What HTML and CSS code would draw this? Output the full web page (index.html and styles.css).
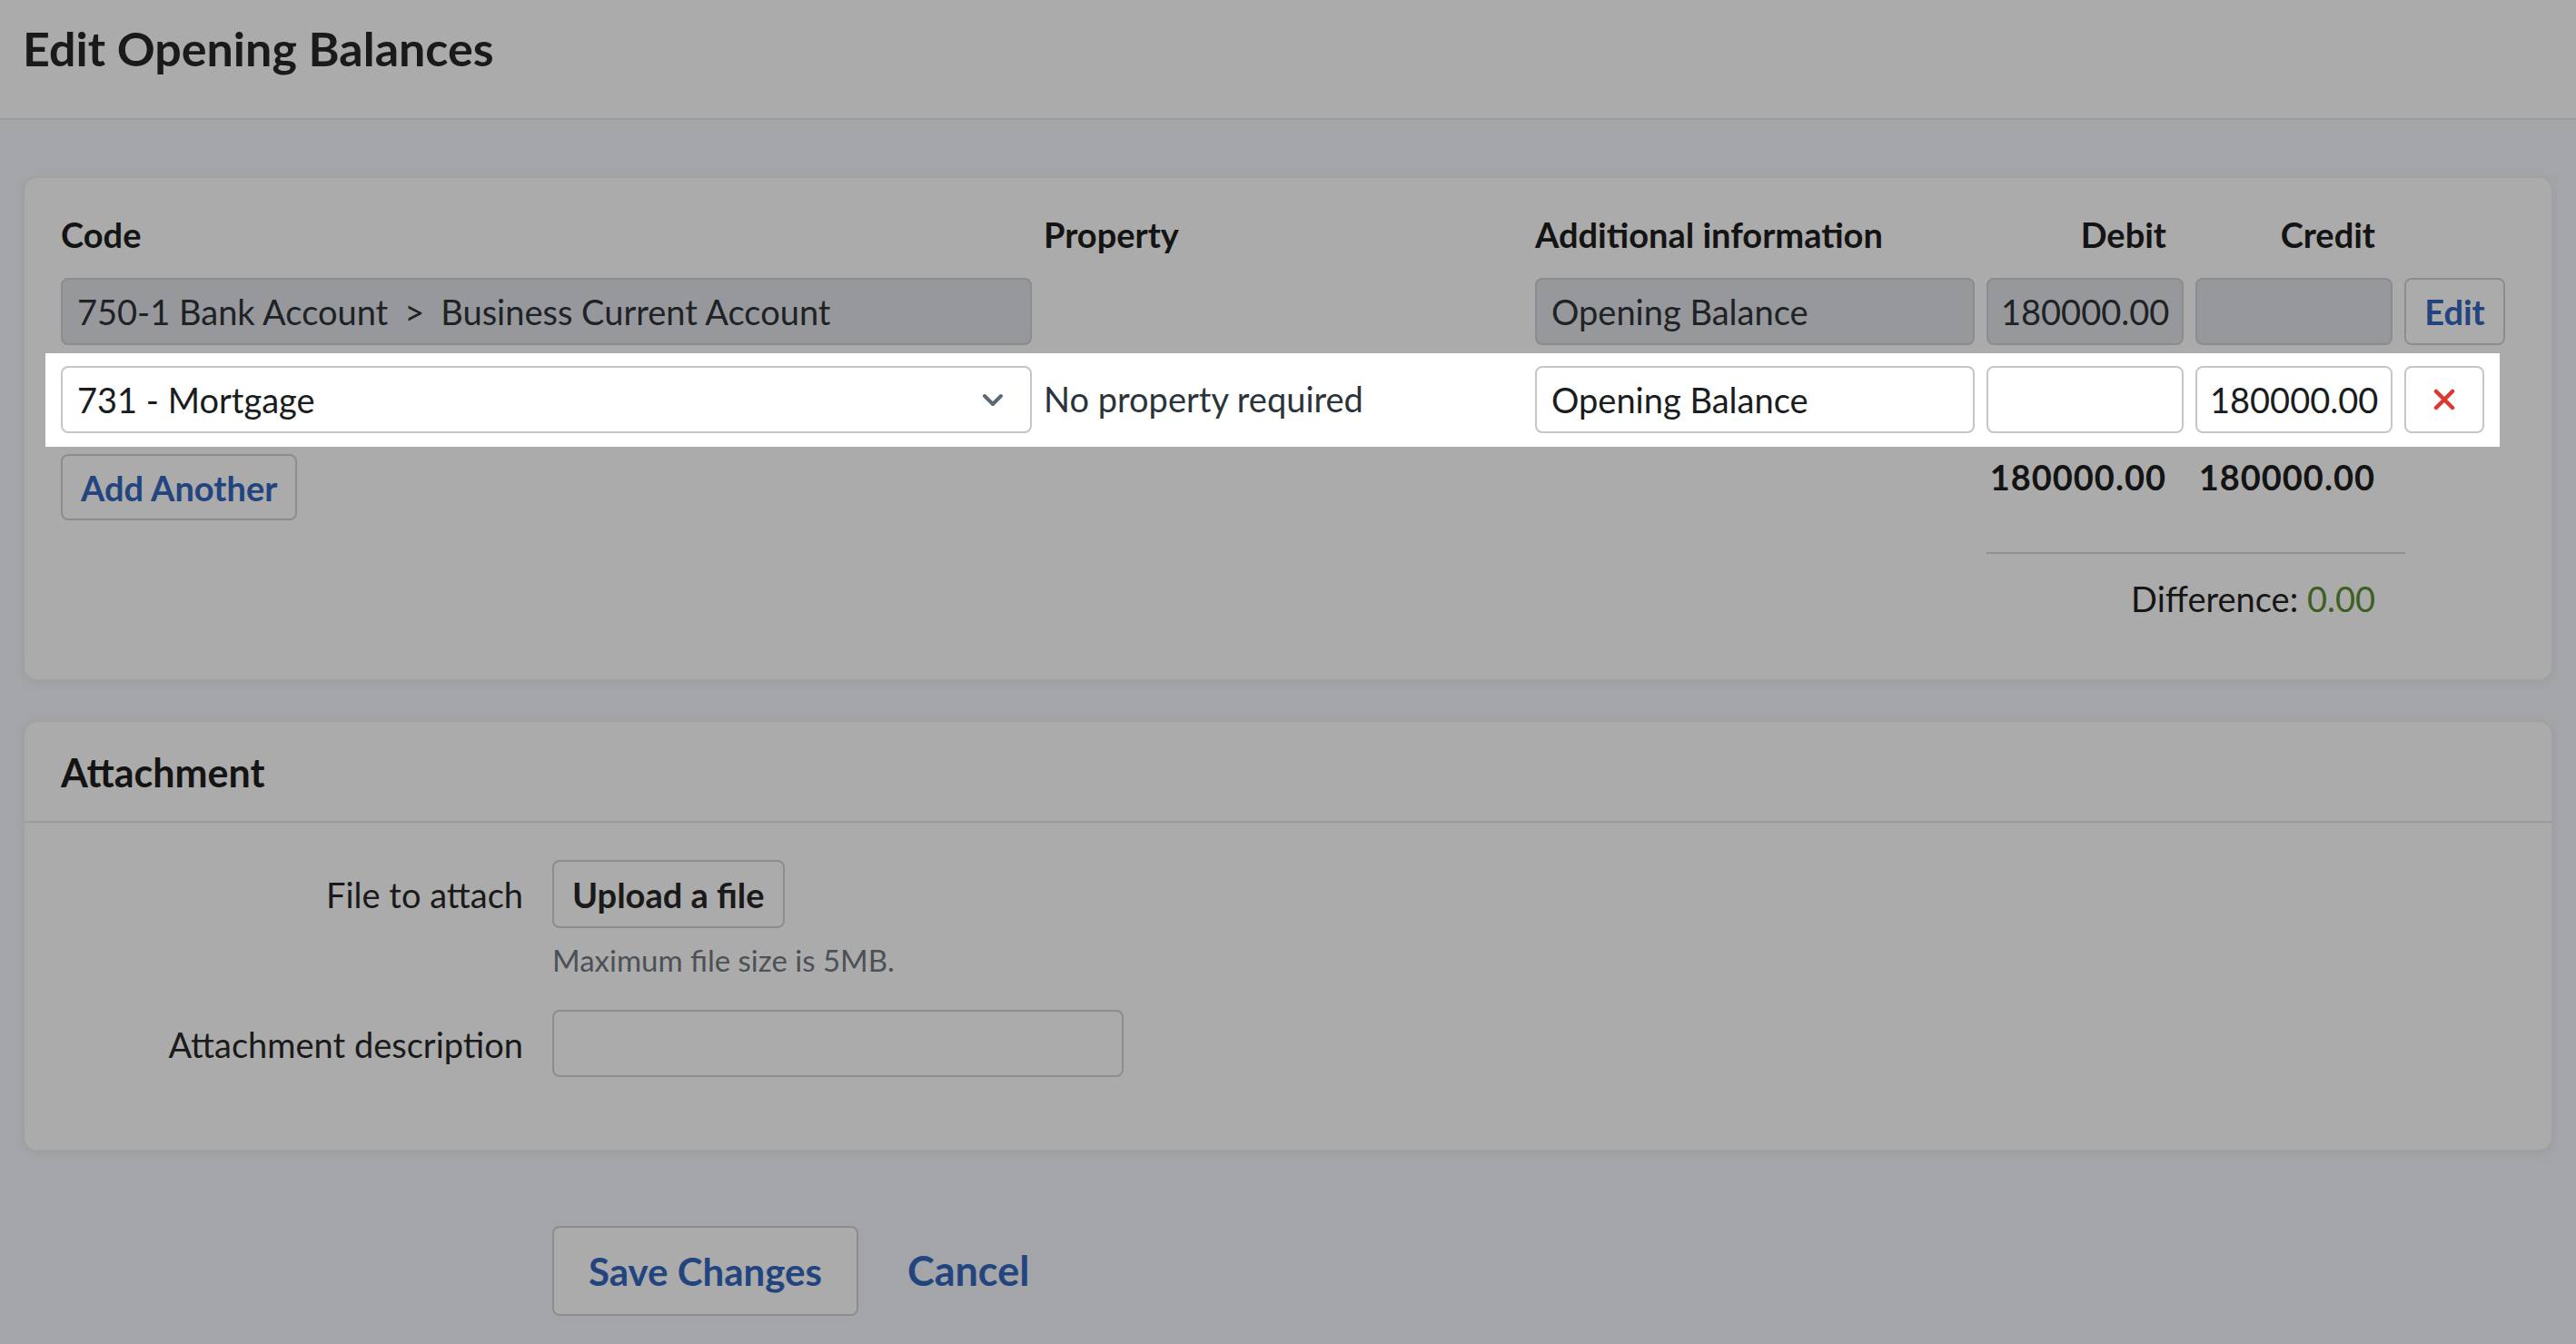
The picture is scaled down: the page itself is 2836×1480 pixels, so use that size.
FILE: index.html
```html
<!DOCTYPE html>
<html lang="en">
<head>
  <meta charset="UTF-8" />
  <meta name="viewport" content="width=device-width, initial-scale=1.0"/>
  <title>Edit Opening Balances</title>
  <link rel="stylesheet" href="styles.css">
</head>
<body>
  <header class="page-header">
    <h1>Edit Opening Balances</h1>
  </header>

  <main class="content">
    <!-- Journal lines -->
    <section class="card ledger">
      <div class="ledger-row ledger-head">
        <div>Code</div>
        <div>Property</div>
        <div>Additional information</div>
        <div class="num">Debit</div>
        <div class="num">Credit</div>
      </div>

      <div class="ledger-row">
        <div class="field field-disabled">750-1 Bank Account<span class="crumb-sep">&gt;</span>Business Current Account</div>
        <div></div>
        <div class="field field-disabled">Opening Balance</div>
        <div class="field field-disabled field-num">180000.00</div>
        <div class="field field-disabled field-num"></div>
        <button class="btn btn-edit">Edit</button>
      </div>

      <div class="ledger-row ledger-row-active">
        <div class="field field-select">
          <span>731 - Mortgage</span>
          <svg class="chevron" width="24" height="15" viewBox="0 0 24 15">
            <path d="M3 3 L12 12 L21 3" fill="none" stroke="#5d6872" stroke-width="4" stroke-linecap="round" stroke-linejoin="round"/>
          </svg>
        </div>
        <div class="cell-text">No property required</div>
        <input class="field" type="text" value="Opening Balance">
        <input class="field field-num" type="text" value="">
        <input class="field field-num" type="text" value="180000.00">
        <button class="btn btn-remove" aria-label="Remove line">
          <svg width="24" height="24" viewBox="0 0 24 24">
            <path d="M3 3 L21 21 M21 3 L3 21" fill="none" stroke="#d93a2d" stroke-width="4.5" stroke-linecap="round"/>
          </svg>
        </button>
      </div>

      <div class="ledger-row ledger-totals">
        <button class="btn btn-link-blue btn-add">Add Another</button>
        <div class="num total total-debit">180000.00</div>
        <div class="num total">180000.00</div>
      </div>

      <div class="ledger-row ledger-summary">
        <div class="summary-rule"></div>
        <div class="num difference">Difference: <span class="diff-ok">0.00</span></div>
      </div>
    </section>

    <!-- Attachment -->
    <section class="card attachment">
      <div class="card-head">Attachment</div>
      <div class="card-body">
        <div class="form-row">
          <label class="form-label">File to attach</label>
          <div>
            <button class="btn btn-upload">Upload a file</button>
            <div class="help-text">Maximum file size is 5MB.</div>
          </div>
        </div>
        <div class="form-row">
          <label class="form-label" for="attDesc">Attachment description</label>
          <div>
            <input class="field field-plain" id="attDesc" type="text">
          </div>
        </div>
      </div>
    </section>

    <div class="actions">
      <button class="btn btn-link-blue btn-save">Save Changes</button>
      <a class="cancel-link" href="#">Cancel</a>
    </div>
  </main>
</body>
</html>
```

FILE: styles.css
```css
* {
  box-sizing: border-box;
}

body {
  margin: 0;
  background-color: #a3a5a9;
  font-family: 'Lato', 'Liberation Sans', sans-serif;
  font-size: 38px;
  line-height: 1.3;
  color: #1f2225;
}

.page-header {
  height: 132px;
  background-color: #ababab;
  border-bottom: 2px solid #9d9d9d;
  padding: 22px 25px 0;
}

.page-header h1 {
  margin: 0;
  font-size: 52px;
  line-height: 62px;
  font-weight: 700;
  color: #1a1a1a;
}

.content {
  padding: 62px 25px 60px;
}

.card {
  background-color: #ababab;
  border: 2px solid #a1a1a1;
  border-radius: 16px;
  box-shadow: 0 2px 8px rgba(0, 0, 0, 0.05);
}

/* ledger table */
.ledger {
  display: flex;
  flex-direction: column;
  align-items: flex-start;
  gap: 23px;
  padding: 38px 40px 64px;
}

.ledger-row {
  display: grid;
  grid-template-columns: 1069px 528px 484px 217px 217px auto;
  column-gap: 13px;
  align-items: center;
}

.ledger-head {
  font-weight: 700;
  line-height: 49px;
  color: #141414;
}

.num {
  text-align: right;
  padding-right: 19px;
}

.field {
  display: block;
  width: 100%;
  height: 74px;
  padding: 0 16px;
  border: 2px solid #8b8c8f;
  border-radius: 8px;
  font-family: inherit;
  font-size: 38px;
  line-height: 70px;
  color: #202326;
  white-space: nowrap;
  overflow: hidden;
}

.field-num {
  padding: 0 10px 0 14px;
}

.field-disabled {
  background-color: #97989b;
}

.crumb-sep {
  margin: 0 18px;
}

.ledger-row-active {
  background-color: #fff;
  padding: 14px 17px 15px;
  margin: -14px -17px -15px;
}

.ledger-row-active .field {
  background-color: #fff;
  border-color: #c3c7cd;
  color: #1a1d20;
  outline: none;
}

.field-select {
  display: flex;
  align-items: center;
  justify-content: space-between;
  padding-right: 29px;
}

.cell-text {
  color: #2b343a;
}

.btn {
  height: 74px;
  padding: 0 21px;
  background-color: #ababab;
  border: 2px solid #8b8d91;
  border-radius: 8px;
  font-family: inherit;
  font-size: 38px;
  font-weight: 700;
  color: #1a1a1a;
  cursor: pointer;
}

.btn-link-blue,
.btn-edit {
  color: #23457f;
}

.btn-edit {
  width: 111px;
  padding: 0;
}

.btn-remove {
  width: 88px;
  padding: 0;
  display: flex;
  align-items: center;
  justify-content: center;
  background-color: #fff;
  border-color: #c3c7cd;
}

.ledger-totals {
  align-items: start;
}

.btn-add {
  justify-self: start;
  height: 73px;
  padding: 0 20px;
}

.total {
  font-weight: 700;
  line-height: 50px;
  letter-spacing: 1px;
  color: #141414;
}

.total-debit {
  grid-column: 4;
}

.ledger-summary {
  margin-top: 12px;
  row-gap: 24px;
}

.summary-rule {
  grid-column: 4 / 6;
  width: calc(100% + 14px);
  height: 2px;
  background-color: #8f8f8f;
}

.difference {
  grid-column: 4 / 6;
  line-height: 50px;
  color: #161616;
}

.diff-ok {
  color: #3e5f22;
}

/* attachment form */
.attachment {
  margin-top: 43px;
}

.card-head {
  padding: 31px 40px 28px;
  border-bottom: 2px solid #9c9c9c;
  font-size: 43px;
  font-weight: 700;
  line-height: 50px;
  color: #141414;
}

.card-body {
  display: flex;
  flex-direction: column;
  gap: 33px;
  padding: 41px 40px 80px;
}

.form-row {
  display: grid;
  grid-template-columns: 509px 1fr;
  column-gap: 32px;
  align-items: start;
}

.form-label {
  text-align: right;
  padding-top: 13px;
  line-height: 50px;
  color: #1a1a1a;
}

.btn-upload {
  height: 75px;
  padding: 0 20px;
}

.help-text {
  margin-top: 13px;
  font-size: 33px;
  line-height: 44px;
  color: #4b5157;
}

.field-plain {
  width: 629px;
  background-color: #ababab;
  border-color: #8a8d92;
}

.actions {
  display: flex;
  align-items: center;
  margin-top: 82px;
  padding-left: 583px;
}

.btn-save {
  height: 99px;
  padding: 0 38px;
  font-size: 42px;
}

.cancel-link {
  margin-left: 54px;
  font-size: 45px;
  font-weight: 700;
  color: #23457f;
  text-decoration: none;
}
```
